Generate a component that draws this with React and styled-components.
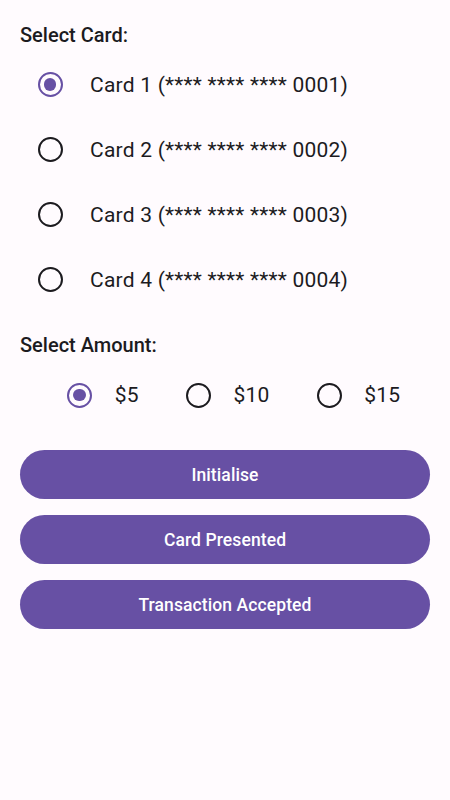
import { useState } from "react"
import styled, { createGlobalStyle } from "styled-components"

const cards = ["0001", "0002", "0003", "0004"]
const amounts = [5, 10, 15]
const actions = ["Initialise", "Card Presented", "Transaction Accepted"]

export default function App(){
    const [card, setCard] = useState(0)
    const [amount, setAmount] = useState(0)
    return(
        <>
          <Global />
          <Page>
            <Heading>Select Card:</Heading>
            <CardList>
              {cards.map((c, i) => (
                <CardRow key={c} onClick={() => setCard(i)}>
                  <RadioBox><Radio selected={card === i} /></RadioBox>
                  <Label>Card {i + 1} (**** **** **** {c})</Label>
                </CardRow>
              ))}
            </CardList>
            <Heading>Select Amount:</Heading>
            <AmountRow>
              {amounts.map((a, i) => (
                <AmountItem key={a} onClick={() => setAmount(i)}>
                  <RadioBox><Radio selected={amount === i} /></RadioBox>
                  <AmountLabel>${a}</AmountLabel>
                </AmountItem>
              ))}
            </AmountRow>
            <Buttons>
              {actions.map(a => <ActionButton key={a}>{a}</ActionButton>)}
            </Buttons>
          </Page>
        </>
    )
}

const Global = createGlobalStyle`
    body{
        margin: 0;
        background: #fffbfe;
        font-family: Roboto, "Liberation Sans", sans-serif;
        color: #1c1b1f;
    }
`
const Page = styled.div`
    min-height: 800px;
    box-sizing: border-box;
    padding: 23px 20px;
    display: flex;
    flex-direction: column;
`
const Heading = styled.div`
    font-size: 20px;
    line-height: 24px;
    font-weight: 500;
`
const CardList = styled.div`
    display: flex;
    flex-direction: column;
    margin-top: 5px;
    margin-bottom: 21px;
`
const CardRow = styled.div`
    height: 65px;
    display: flex;
    align-items: center;
    cursor: pointer;
`
const RadioBox = styled.div`
    width: 60px;
    height: 60px;
    display: flex;
    align-items: center;
    justify-content: center;
    flex-shrink: 0;
`
const Radio = styled.div`
    width: 25px;
    height: 25px;
    box-sizing: border-box;
    border-radius: 50%;
    border: 2.5px solid ${props => props.selected ? "#6750a4" : "#1c1b1f"};
    display: flex;
    align-items: center;
    justify-content: center;
    &::after{
        content: "";
        width: 12.5px;
        height: 12.5px;
        border-radius: 50%;
        background: #6750a4;
        display: ${props => props.selected ? "block" : "none"};
    }
`
const Label = styled.span`
    margin-left: 10px;
    font-size: 21px;
    letter-spacing: 0.22px;
`
const AmountRow = styled.div`
    display: flex;
    justify-content: space-evenly;
    margin-top: 8px;
    margin-bottom: 25px;
`
const AmountItem = styled.div`
    display: flex;
    align-items: center;
    cursor: pointer;
`
const AmountLabel = styled.span`
    margin-left: 5px;
    font-size: 21px;
    letter-spacing: 0.22px;
`
const Buttons = styled.div`
    display: flex;
    flex-direction: column;
    gap: 16px;
`
const ActionButton = styled.button`
    height: 49px;
    border: none;
    border-radius: 25px;
    background-color: #6750a4;
    color: #ffffff;
    font-family: Roboto, "Liberation Sans", sans-serif;
    font-size: 17.5px;
    font-weight: 500;
    letter-spacing: 0.1px;
`
